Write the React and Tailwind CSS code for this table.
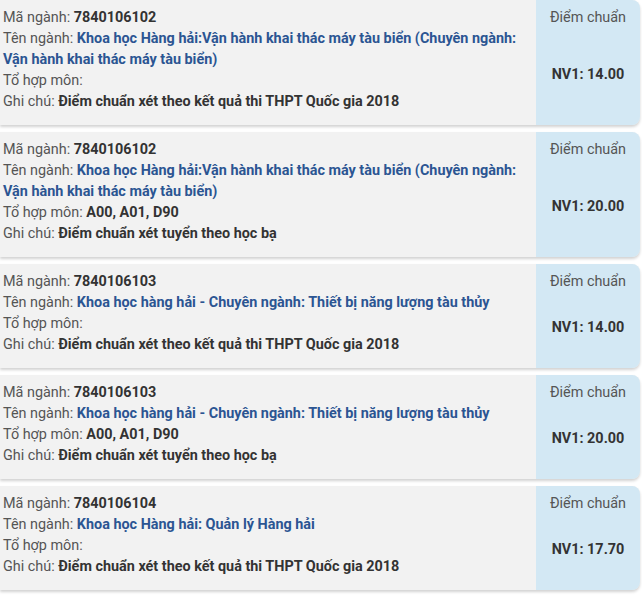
const items = [
  {
    code: "7840106102",
    name: "Khoa học Hàng hải:Vận hành khai thác máy tàu biển (Chuyên ngành: Vận hành khai thác máy tàu biển)",
    combo: "",
    note: "Điểm chuẩn xét theo kết quả thi THPT Quốc gia 2018",
    score: "NV1: 14.00",
  },
  {
    code: "7840106102",
    name: "Khoa học Hàng hải:Vận hành khai thác máy tàu biển (Chuyên ngành: Vận hành khai thác máy tàu biển)",
    combo: "A00, A01, D90",
    note: "Điểm chuẩn xét tuyển theo học bạ",
    score: "NV1: 20.00",
  },
  {
    code: "7840106103",
    name: "Khoa học hàng hải - Chuyên ngành: Thiết bị năng lượng tàu thủy",
    combo: "",
    note: "Điểm chuẩn xét theo kết quả thi THPT Quốc gia 2018",
    score: "NV1: 14.00",
  },
  {
    code: "7840106103",
    name: "Khoa học hàng hải - Chuyên ngành: Thiết bị năng lượng tàu thủy",
    combo: "A00, A01, D90",
    note: "Điểm chuẩn xét tuyển theo học bạ",
    score: "NV1: 20.00",
  },
  {
    code: "7840106104",
    name: "Khoa học Hàng hải: Quản lý Hàng hải",
    combo: "",
    note: "Điểm chuẩn xét theo kết quả thi THPT Quốc gia 2018",
    score: "NV1: 17.70",
  },
];

function Card({ item }) {
  return (
    <div className="flex bg-[#f2f2f2] rounded-r-lg shadow-[0_2px_3px_rgba(0,0,0,0.18)] overflow-hidden">
      <div className="flex-1 pl-[3px] pr-2 pt-[7px] pb-[13px] text-[14.4px] leading-[21px] text-[#555]">
        <div>
          Mã ngành: <span className="font-bold text-[#333]">{item.code}</span>
        </div>
        <div>
          Tên ngành: <span className="font-bold text-[#2b5592]">{item.name}</span>
        </div>
        <div>
          Tổ hợp môn: <span className="font-bold text-[#333]">{item.combo}</span>
        </div>
        <div>
          Ghi chú: <span className="font-bold text-[#333]">{item.note}</span>
        </div>
      </div>
      <div className="w-[104px] shrink-0 bg-[#d3e8f4] flex flex-col items-center text-[14.4px] leading-[21px] pt-[7px]">
        <div className="text-[#555]">Điểm chuẩn</div>
        <div className="flex-1 flex items-center pb-[5px] font-bold text-[#333]">{item.score}</div>
      </div>
    </div>
  );
}

export default function App() {
  return (
    <div className="w-[642px] bg-white pr-[2px] pb-2 flex flex-col gap-[7px] font-['Roboto',sans-serif]">
      {items.map((item, i) => (
        <Card key={i} item={item} />
      ))}
    </div>
  );
}
